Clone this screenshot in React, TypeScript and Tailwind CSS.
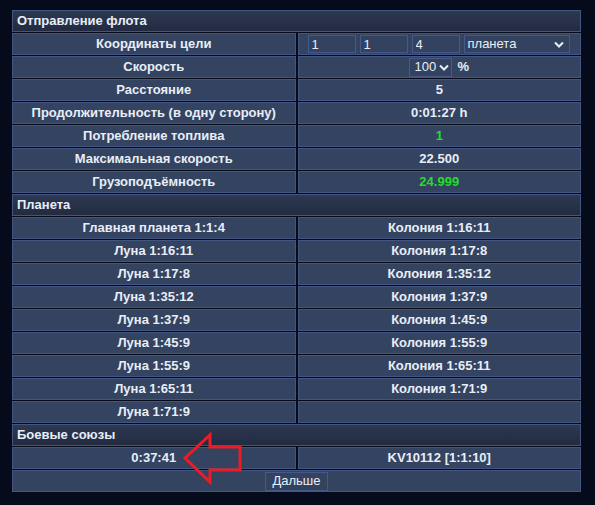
import React from "react";

const cell =
  "border border-[#44557f] bg-[#34435f] h-[22px] p-0 text-center align-middle font-bold leading-[20px]";
const head =
  "border border-[#44557f] bg-gradient-to-b from-[#2d3852] to-[#222b40] h-[22px] p-0 pl-[4px] text-left align-middle font-bold leading-[20px]";
const field =
  "h-[18px] border border-[#45588a] bg-[#33425e] text-[#e8eef8] text-[13px] font-normal leading-[16px] px-[3px] outline-none";

const planets: [string, string][] = [
  ["Главная планета 1:1:4", "Колония 1:16:11"],
  ["Луна 1:16:11", "Колония 1:17:8"],
  ["Луна 1:17:8", "Колония 1:35:12"],
  ["Луна 1:35:12", "Колония 1:37:9"],
  ["Луна 1:37:9", "Колония 1:45:9"],
  ["Луна 1:45:9", "Колония 1:55:9"],
  ["Луна 1:55:9", "Колония 1:65:11"],
  ["Луна 1:65:11", "Колония 1:71:9"],
  ["Луна 1:71:9", ""],
];

function Chevron() {
  return (
    <svg width="10" height="7" viewBox="0 0 10 7" className="shrink-0">
      <path d="M1 1.5 L5 5.5 L9 1.5" fill="none" stroke="#e8eef8" strokeWidth="2" />
    </svg>
  );
}

export default function App() {
  return (
    <div
      className="relative min-h-[505px] w-[595px] bg-[#050b1b] text-[13px] text-[#e8eef8]"
      style={{ fontFamily: '"Liberation Sans", Arial, sans-serif' }}
    >
      <div className="pt-[9px] pl-[10px]">
        <table className="w-[573px] table-fixed border-separate border-spacing-x-[2px] border-spacing-y-[1px]">
          <tbody>
            <tr>
              <td colSpan={2} className={head}>Отправление флота</td>
            </tr>
            <tr>
              <td className={cell}>Координаты цели</td>
              <td className={cell}>
                <div className="flex items-center gap-[4px] pl-[9px]">
                  <input className={`${field} w-[48px]`} defaultValue="1" />
                  <input className={`${field} w-[48px]`} defaultValue="1" />
                  <input className={`${field} w-[48px]`} defaultValue="4" />
                  <div className={`${field} flex w-[106px] items-center justify-between pr-[5px]`}>
                    <span>планета</span>
                    <Chevron />
                  </div>
                </div>
              </td>
            </tr>
            <tr>
              <td className={cell}>Скорость</td>
              <td className={cell}>
                <div className="flex items-center justify-center gap-[5px]">
                  <div className={`${field} flex h-[19px] w-[43px] items-center gap-[3px] pl-[4px]`}>
                    <span>100</span>
                    <Chevron />
                  </div>
                  <span>%</span>
                </div>
              </td>
            </tr>
            <tr>
              <td className={cell}>Расстояние</td>
              <td className={cell}>5</td>
            </tr>
            <tr>
              <td className={cell}>Продолжительность (в одну сторону)</td>
              <td className={cell}>0:01:27 h</td>
            </tr>
            <tr>
              <td className={cell}>Потребление топлива</td>
              <td className={`${cell} text-[#22dd2e]`}>1</td>
            </tr>
            <tr>
              <td className={cell}>Максимальная скорость</td>
              <td className={cell}>22.500</td>
            </tr>
            <tr>
              <td className={cell}>Грузоподъёмность</td>
              <td className={`${cell} text-[#22dd2e]`}>24.999</td>
            </tr>
            <tr>
              <td colSpan={2} className={head}>Планета</td>
            </tr>
            {planets.map(([a, b]) => (
              <tr key={a}>
                <td className={cell}>{a}</td>
                <td className={cell}>{b}</td>
              </tr>
            ))}
            <tr>
              <td colSpan={2} className={head}>Боевые союзы</td>
            </tr>
            <tr>
              <td className={cell}>0:37:41</td>
              <td className={cell}>KV10112 [1:1:10]</td>
            </tr>
            <tr>
              <td colSpan={2} className={cell}>
                <div className="flex justify-center">
                  <button className="h-[19px] border border-[#45588a] bg-[#33425e] px-[6px] text-[13px] font-normal leading-[16px] text-[#e8eef8]">
                    Дальше
                  </button>
                </div>
              </td>
            </tr>
          </tbody>
        </table>
      </div>

      {/* red arrow pointing at the timer */}
      <svg className="absolute left-[180px] top-[430px]" width="64" height="56" viewBox="180 430 64 56">
        <polygon
          points="185,458 210,435 210,447 240,447 240,470 210,470 210,482"
          fill="none"
          stroke="#ec1c24"
          strokeWidth="3"
          strokeLinejoin="miter"
        />
      </svg>
    </div>
  );
}
